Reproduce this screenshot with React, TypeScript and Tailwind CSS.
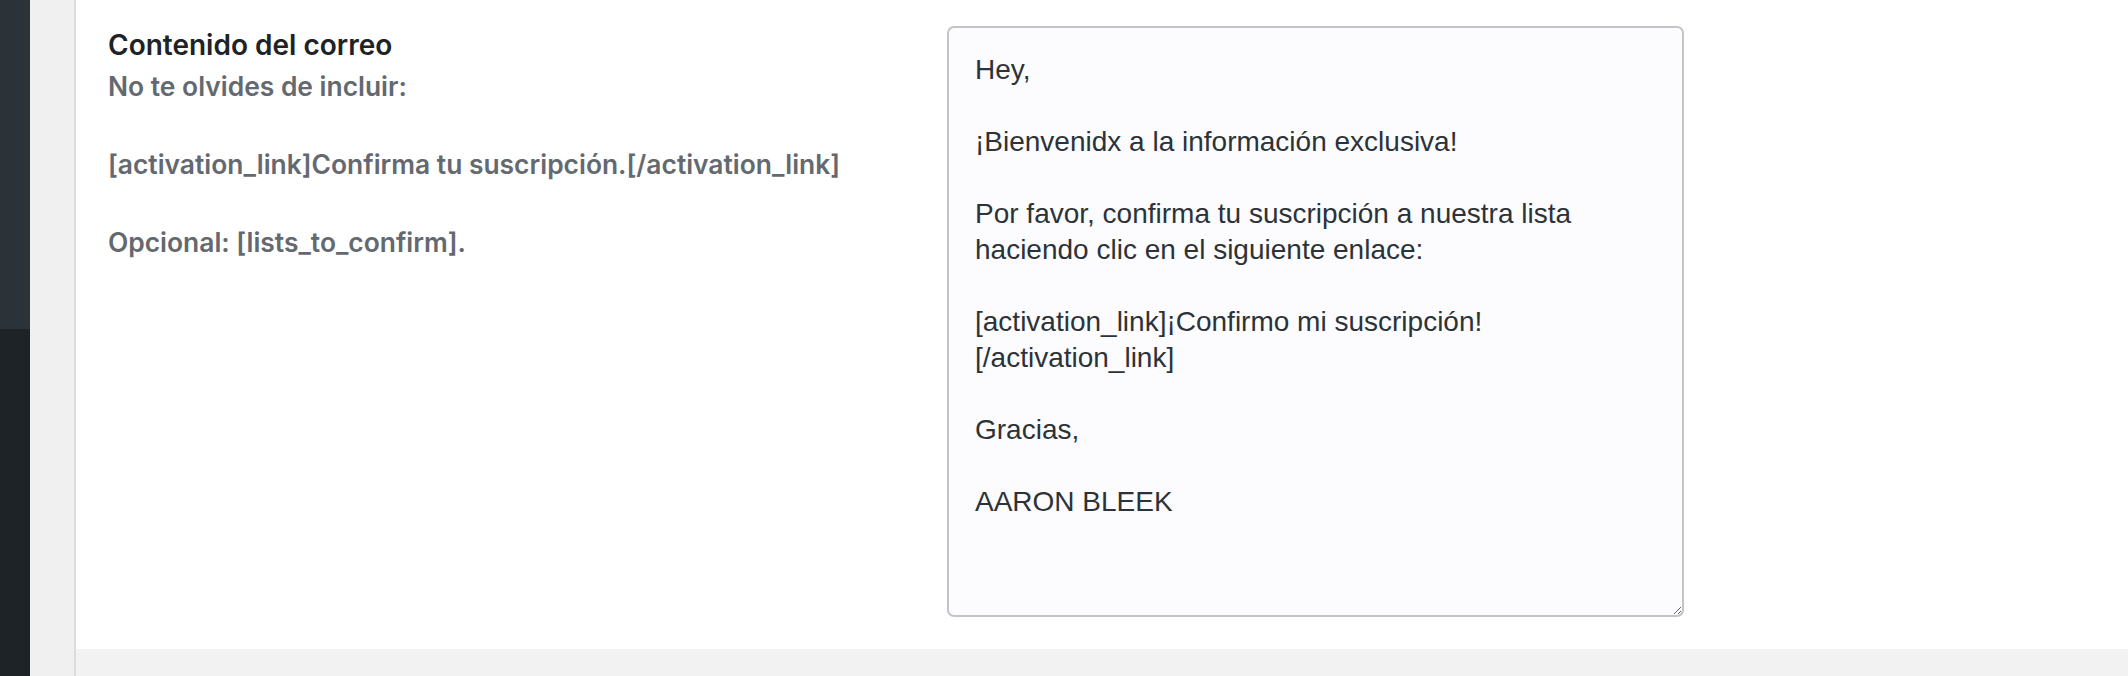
import React from "react";

const EMAIL_TEXT =
  "Hey,\n\n¡Bienvenidx a la información exclusiva!\n\nPor favor, confirma tu suscripción a nuestra lista\nhaciendo clic en el siguiente enlace:\n\n[activation_link]¡Confirmo mi suscripción!\n[/activation_link]\n\nGracias,\n\nAARON BLEEK";

export default function App() {
  return (
    <div className="flex h-[676px] w-full overflow-hidden">
      {/* admin sidebar edge */}
      <div className="flex w-[30px] shrink-0 flex-col">
        <div className="h-[329px] bg-[#2c3338]" />
        <div className="flex-1 bg-[#1d2327]" />
      </div>
      {/* gutter */}
      <div className="w-[44px] shrink-0 bg-[#f0f0f1]" />
      {/* content panel */}
      <div className="flex flex-1 flex-col border-l-2 border-[#dcdcde]">
        <div className="flex h-[649px] bg-white pl-[32px] pt-[25px]">
          <div
            className="w-[839px] shrink-0"
            style={{ fontFamily: "Inter, 'Noto Sans', sans-serif" }}
          >
            <div className="mt-[2px] text-[28px] font-semibold leading-[36px] text-[#1d2327]">
              Contenido del correo
            </div>
            <div className="mt-[4px] text-[26.4px] font-semibold leading-[39px] text-[#646970]">
              <div>No te olvides de incluir:</div>
              <div>&nbsp;</div>
              <div>[activation_link]Confirma tu suscripción.[/activation_link]</div>
              <div>&nbsp;</div>
              <div>Opcional: [lists_to_confirm].</div>
            </div>
          </div>
          <textarea
            readOnly
            defaultValue={EMAIL_TEXT}
            className="mt-[1px] h-[591px] w-[737px] shrink-0 resize rounded-[7px] border-2 border-[#c3c4c7] bg-[#fcfcfe] px-[26px] py-[24px] text-[28px] leading-[36px] text-[#2c3338] outline-none"
            style={{ fontFamily: "'Liberation Sans', Arial, sans-serif" }}
          />
        </div>
        <div className="flex-1 bg-[#f2f2f2]" />
      </div>
    </div>
  );
}
